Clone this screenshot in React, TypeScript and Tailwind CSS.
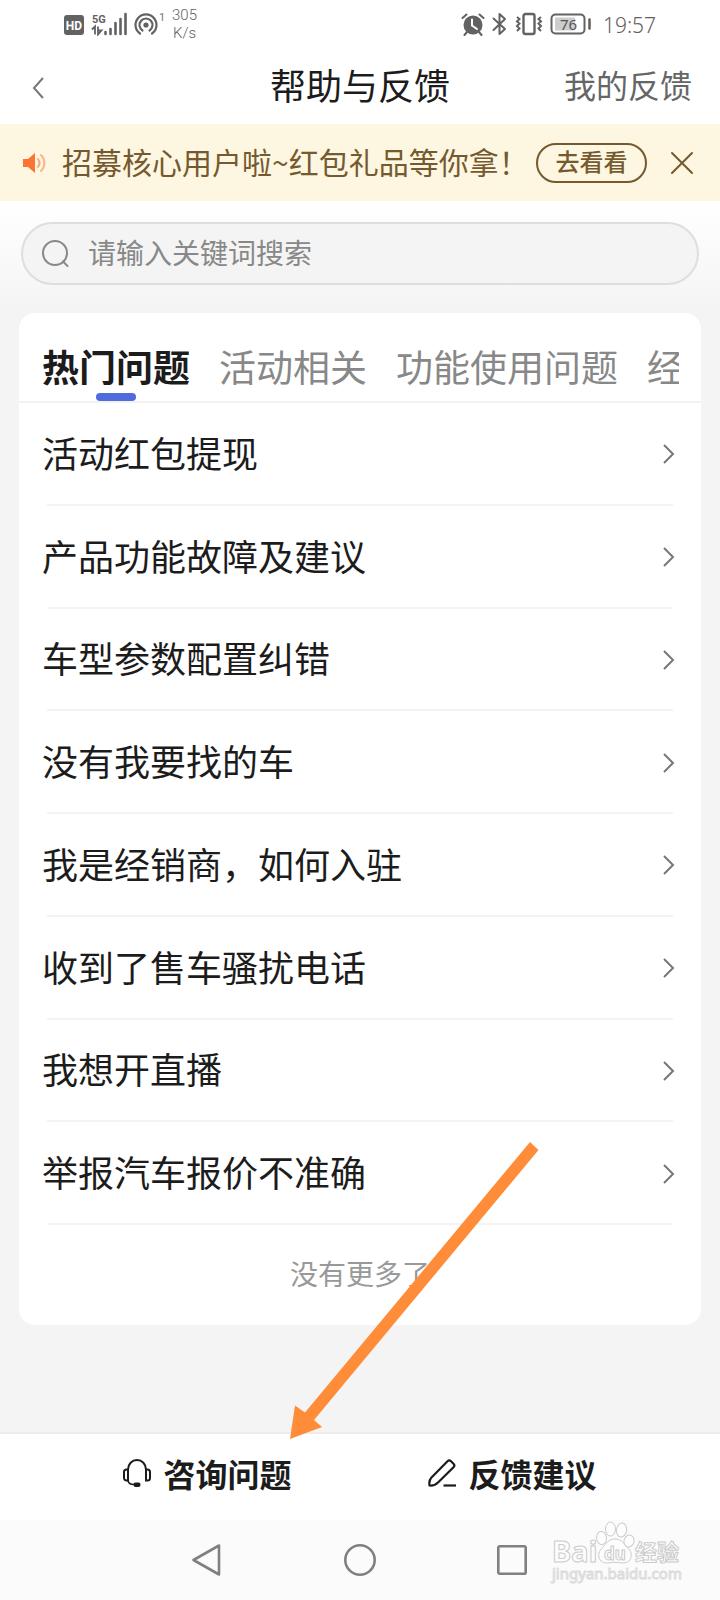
import { useState } from "react"

const tabs = ["热门问题", "活动相关", "功能使用问题", "经销商入驻"]

const questions = [
    "活动红包提现",
    "产品功能故障及建议",
    "车型参数配置纠错",
    "没有我要找的车",
    "我是经销商，如何入驻",
    "收到了售车骚扰电话",
    "我想开直播",
    "举报汽车报价不准确",
]

function StatusBar() {
    return (
        <div className="flex h-12 items-center justify-between pl-16 pr-16 text-[#626262]">
            <div className="flex items-center">
                <svg className="h-6 w-[100px]" viewBox="0 0 100 24" fill="none" role="img" aria-label="HD 5G">
                    <rect x="0" y="3" width="20" height="20" rx="3" fill="#626262" />
                    <text x="10" y="17.500" textAnchor="middle" fontSize="12" fontWeight="700" fill="#fff" fontFamily="Roboto, sans-serif">HD</text>
                    <text x="28" y="11" fontSize="11" fontWeight="700" fill="#626262" fontFamily="Roboto, sans-serif">5G</text>
                    <path d="M28 17.500l3-3v8M34 14.500v8l3.500-4H34" stroke="#626262" strokeWidth="1.8" />
                    <path d="M41.500 22v-2M46.500 22v-5M51.500 22V11M56.500 22V7M61.500 22V2" stroke="#626262" strokeWidth="2.6" strokeLinecap="round" />
                    <circle cx="82" cy="13" r="2.600" fill="#626262" />
                    <path d="M78.500 18.500a6.500 6.500 0 1 1 7 0M76 21.500a10.500 10.500 0 1 1 12 0" stroke="#626262" strokeWidth="2.2" strokeLinecap="round" />
                    <text x="95" y="9" fontSize="11" fill="#777" fontFamily="Roboto, sans-serif">1</text>
                </svg>
                <div className="ml-2 text-center font-['Roboto',sans-serif] text-[15px] leading-[18px] font-light">
                    <p>305</p>
                    <p>K/s</p>
                </div>
            </div>
            <div className="flex items-center gap-3">
                <svg className="h-6 w-[130px]" viewBox="0 0 130 24" fill="none" role="img" aria-label="电量 76">
                    {/* alarm */}
                    <circle cx="12" cy="13" r="9.500" fill="#626262" />
                    <path d="M1.500 6l4-3.500M22.500 6l-4-3.500M6 20l-2.500 3M18 20l2.500 3" stroke="#626262" strokeWidth="2" strokeLinecap="round" />
                    <path d="M11 7.500v6l5 3.500" stroke="#fff" strokeWidth="2" strokeLinecap="round" />
                    {/* bluetooth */}
                    <path d="M32.500 6.500L44 17l-5.500 5V2l5.500 5-11.500 11" stroke="#626262" strokeWidth="2" strokeLinejoin="round" strokeLinecap="round" />
                    {/* vibrate */}
                    <rect x="62.500" y="2" width="11" height="20" rx="2" stroke="#626262" strokeWidth="2.4" />
                    <path d="M56 5l2.500 2L56 9.500l2.500 2L56 14l2.500 2.500L56 19M80 5l-2.500 2L80 9.500l-2.500 2L80 14l-2.500 2.500L80 19" stroke="#626262" strokeWidth="2" />
                    {/* battery */}
                    <rect x="90.500" y="2.500" width="33" height="19" rx="4" stroke="#626262" strokeWidth="2" />
                    <rect x="94" y="5.500" width="20" height="13" rx="1" fill="#cdcdcd" />
                    <path d="M128.500 7.500v9" stroke="#626262" strokeWidth="2.6" strokeLinecap="round" />
                    <text x="107.500" y="17.500" textAnchor="middle" fontSize="15" fill="#555" fontFamily="Noto Sans, sans-serif">76</text>
                </svg>
                <time className="pt-[2px] font-['Noto_Sans',sans-serif] text-[21px] leading-6 font-light">19:57</time>
            </div>
        </div>
    )
}

function HeadsetIcon() {
    return (
        <svg className="h-7 w-7" viewBox="0 0 28 28" fill="none" stroke="#1c1c1c" strokeWidth="2">
            <path d="M5 10.500C5 5 9 1 14 1s9 4 9 9.500" />
            <path d="M5 10.500v11H3.500A2.500 2.500 0 0 1 1 19v-6a2.500 2.500 0 0 1 2.500-2.500zM23 10.500v11h1.500A2.500 2.500 0 0 0 27 19v-6a2.500 2.500 0 0 0-2.500-2.500z" />
            <path d="M5 21c0 3 2 4.500 6 4.500" strokeWidth="1.600" />
            <rect x="10.500" y="23.500" width="7" height="4.500" rx="2" fill="#1c1c1c" stroke="none" />
        </svg>
    )
}

function PenIcon() {
    return (
        <svg className="h-7 w-7" viewBox="0 0 28 28" fill="none" stroke="#1c1c1c" strokeWidth="2.200" strokeLinejoin="round">
            <path d="M1.500 26.500c-.5-3 0-6 2-8L19.500 2.300a2.500 2.500 0 0 1 3.500 0l2.500 2.500a2.500 2.500 0 0 1 0 3.500L10 23.500c-2.500 2.500-5 3.500-8.500 3z" />
            <path d="M15.500 26.500H28" />
        </svg>
    )
}

function Watermark() {
    return (
        <svg className="pointer-events-none absolute right-[36px] bottom-[14px] h-[66px] w-[134px]" viewBox="0 0 134 66" fill="#fdfdfd" stroke="#cbcbcb" strokeWidth="1">
            <text x="2" y="42" fontSize="29" fontWeight="700" fontFamily="Noto Sans, sans-serif">Bai</text>
            <path d="M65 19c5 0 8 3 11 7 4 4 6 7 5 11-1 5-5 6-9 6-5-1-9-1-14 0-4 0-8-1-9-6-1-4 1-7 5-11 3-4 6-7 11-7z" />
            <ellipse cx="51.500" cy="18" rx="5" ry="6.500" transform="rotate(-8 51.500 18)" />
            <ellipse cx="60.500" cy="9" rx="5" ry="7" />
            <ellipse cx="71.500" cy="10" rx="5" ry="7" transform="rotate(8 71.500 10)" />
            <ellipse cx="79" cy="21" rx="5" ry="6" transform="rotate(15 79 21)" />
            <text x="65" y="40" textAnchor="middle" fontSize="17" fontWeight="700" fontFamily="Noto Sans, sans-serif">du</text>
            <text x="85" y="40" fontSize="22" fontWeight="700" fontFamily="Noto Sans CJK SC, sans-serif">经验</text>
            <text x="2" y="59" fontSize="15" stroke="#dadada" fontFamily="Noto Sans, sans-serif">jingyan.baidu.com</text>
        </svg>
    )
}

export default function App() {
    const [activeTab, setActiveTab] = useState(tabs[0])
    const [showNotice, setShowNotice] = useState(true)

    return (
        <div className="relative flex min-h-screen flex-col overflow-hidden bg-[#f4f4f4] font-['Noto_Sans_CJK_SC',sans-serif] text-[#1c1c1c]">
            <header className="bg-white">
                <StatusBar />
                <div className="grid h-[76px] grid-cols-[1fr_auto_1fr] items-center px-7 pb-1">
                    <button type="button" aria-label="返回" className="justify-self-start pt-2 pl-1">
                        <svg className="h-6 w-3" viewBox="0 0 12 24" fill="none" stroke="#777" strokeWidth="2">
                            <path d="M11 2L2 12l9 10" />
                        </svg>
                    </button>
                    <h1 className="text-4xl">帮助与反馈</h1>
                    <a href="#" className="justify-self-end text-[32px] leading-10 text-[#666]">我的反馈</a>
                </div>
            </header>

            {/* お知らせ */}
            {showNotice && (
                <div className="flex h-[77px] items-center bg-[#fdf6e0] pl-[22px] pr-[26px] text-[#75592f]">
                    <svg className="h-6 w-6 shrink-0" viewBox="0 0 24 24" fill="none">
                        <path d="M1 8h5l7-6v20l-7-6H1z" fill="#fb7434" />
                        <path d="M16 8c2 2.500 2 5.500 0 8" stroke="#f9a878" strokeWidth="2" strokeLinecap="round" />
                        <path d="M19 4c4.500 4.500 4.500 11.500 0 16" stroke="#f9b58c" strokeWidth="2" strokeLinecap="round" />
                    </svg>
                    <p className="ml-4 min-w-0 flex-1 pb-1 text-[30px] leading-[44px] whitespace-nowrap">招募核心用户啦~红包礼品等你拿！</p>
                    <button type="button" className="h-10 w-[111px] shrink-0 rounded-full border-2 border-[#75592f] pb-1 text-2xl leading-8 font-medium">去看看</button>
                    <button type="button" aria-label="关闭" className="ml-[23px] shrink-0" onClick={() => setShowNotice(false)}>
                        <svg className="h-6 w-6" viewBox="0 0 24 24" fill="none" stroke="#75592f" strokeWidth="2" strokeLinecap="round">
                            <path d="M2 2l20 20M22 2L2 22" />
                        </svg>
                    </button>
                </div>
            )}

            <div className="bg-linear-to-b from-white to-[#f4f4f4] px-[21px] pt-[21px] pb-7">
                <label className="flex h-[63px] items-center rounded-full border-2 border-[#dedede] bg-[#f4f4f4] pl-[18px] pr-5">
                    <svg className="h-7 w-7 shrink-0" viewBox="0 0 28 28" fill="none" stroke="#888" strokeWidth="2" strokeLinecap="round">
                        <circle cx="14" cy="13" r="12" />
                        <path d="M22 21.500l4.500 4.500" />
                    </svg>
                    <input
                        type="search"
                        aria-label="搜索"
                        placeholder="请输入关键词搜索"
                        className="ml-[19px] min-w-0 flex-1 bg-transparent pb-1 text-[28px] leading-10 outline-none placeholder:text-[#888]"
                    />
                </label>
            </div>

            <main className="flex-1 px-[19px] pb-8">
                <section className="rounded-2xl bg-white">
                    {/* タブ */}
                    <div className="border-b-2 border-[#f3f3f3] pt-[26px] pl-[23px] pr-[22px]">
                        <div role="tablist" className="flex gap-[29px] overflow-hidden">
                            {tabs.map((tab) => (
                                <button
                                    key={tab}
                                    type="button"
                                    role="tab"
                                    aria-selected={tab === activeTab}
                                    onClick={() => setActiveTab(tab)}
                                    className={`flex shrink-0 flex-col items-center text-[37px] leading-[54px] whitespace-nowrap ${tab === activeTab ? "font-bold" : "text-[#888]"}`}
                                >
                                    {tab}
                                    <span className={`h-2 w-10 rounded ${tab === activeTab ? "bg-[#4f6bdc]" : ""}`} />
                                </button>
                            ))}
                        </div>
                    </div>

                    <ul className="grid min-h-[822px] auto-rows-fr pl-[23px] pr-[26px]">
                        {questions.map((question) => (
                            <li key={question} className="flex flex-col">
                                <a href="#" className="flex flex-1 items-center justify-between pb-[3px] text-4xl">
                                    {question}
                                    <svg className="mt-[5px] h-6 w-3" viewBox="0 0 12 24" fill="none" stroke="#777" strokeWidth="2">
                                        <path d="M1 3l9 9-9 9" />
                                    </svg>
                                </a>
                                <div className="mr-[2px] ml-[5px] h-[2px] bg-[#f3f3f3]" />
                            </li>
                        ))}
                    </ul>
                    <p className="pt-7 pb-8 text-center text-[28px] leading-10 text-[#999]">没有更多了</p>
                </section>
            </main>

            <footer>
                <div className="grid h-[88px] grid-cols-2 border-t-2 border-[#ececec] bg-white px-[55px] pb-2">
                    <button type="button" className="flex items-center justify-center gap-3 text-[32px] leading-10 font-bold">
                        <HeadsetIcon />
                        咨询问题
                    </button>
                    <button type="button" className="flex items-center justify-center gap-3 text-[32px] leading-10 font-bold">
                        <PenIcon />
                        反馈建议
                    </button>
                </div>
                <nav className="flex h-20 items-center justify-center gap-[120px] bg-[#fbfbfb]">
                    <button type="button" aria-label="后退">
                        <svg className="h-8 w-8" viewBox="0 0 32 32" fill="none" stroke="#808080" strokeWidth="2.6" strokeLinejoin="round">
                            <path d="M27 1.500v29L1.500 16z" />
                        </svg>
                    </button>
                    <button type="button" aria-label="主页">
                        <svg className="h-8 w-8" viewBox="0 0 32 32" fill="none" stroke="#808080" strokeWidth="2.6">
                            <circle cx="16" cy="16" r="14.700" />
                        </svg>
                    </button>
                    <button type="button" aria-label="最近任务">
                        <svg className="h-8 w-8" viewBox="0 0 32 32" fill="none" stroke="#808080" strokeWidth="2.6">
                            <rect x="2.300" y="2.300" width="27.400" height="27.400" rx="1.500" />
                        </svg>
                    </button>
                </nav>
            </footer>

            <Watermark />

            <svg className="pointer-events-none absolute top-[1142px] left-[290px] h-[297px] w-[250px]" viewBox="0 0 250 297" fill="#fe8c38">
                <path d="M240 0L248.500 8 24 278l8 7L0 297l5-33.500 10 7z" />
            </svg>
        </div>
    )
}
